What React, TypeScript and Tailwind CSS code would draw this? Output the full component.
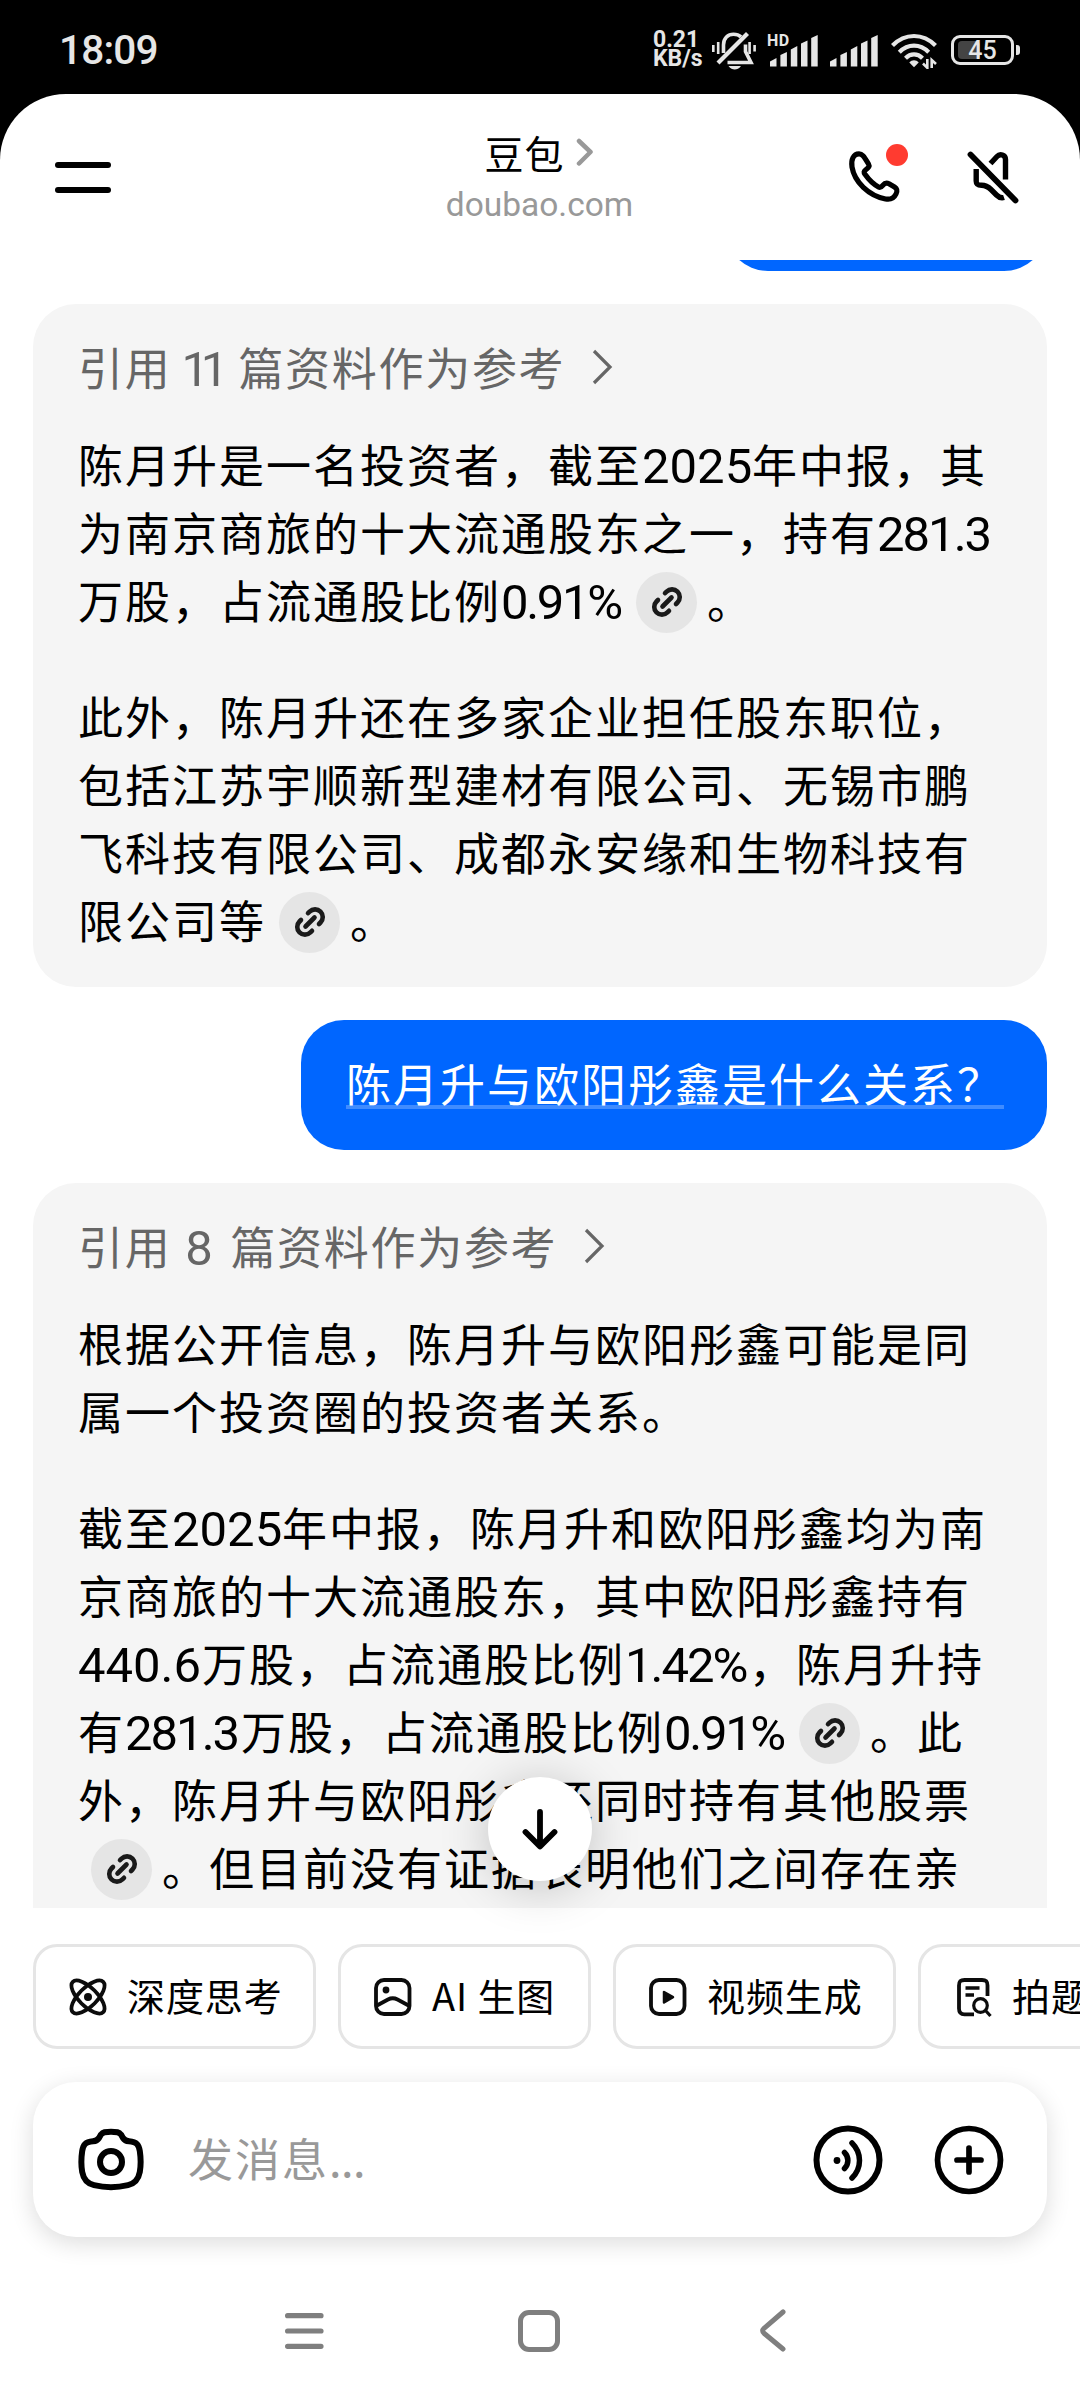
import { ReactNode } from "react";
import clsx from "clsx";

const cjk = "font-['Noto_Sans_CJK_SC',sans-serif]"
const latin = "font-[Roboto,'Noto_Sans_CJK_SC',sans-serif]"

const SignalBars = () => (
    <svg width="48" height="32" viewBox="0 0 48 32" fill="#e6e6e6">
        <path d="M0 31.5V26.5L6.5 23V31.5ZM10.4 31.5V20L16.9 17V31.5ZM20.8 31.5V14.5L27.3 11V31.5ZM31 31.5V8.5L37.5 5.5V31.5ZM41.2 31.5V3L47.7 0V31.5Z" />
    </svg>
)

const StatusBar = () => (
    <div className={clsx("flex h-[94px] shrink-0 items-start justify-between bg-black pr-[60px] pl-[59px] text-[#e6e6e6]", latin)}>
        <div className="mt-[30px] text-[40.5px] leading-[41px] font-medium tracking-[-0.8px]">18:09</div>
        <div className="flex items-start">
            <div className="mt-[30px] w-[51px] text-[23px] leading-[19px] font-bold">
                <div>0.21</div>
                <div>KB/s</div>
            </div>
            <svg className="mt-[30px] ml-[7px]" width="46" height="40" viewBox="0 0 46 40" fill="none" stroke="#e6e6e6" strokeWidth="3.6">
                <path d="M12.5 23V15C12.5 8 17 4.2 22.5 4.2C25.5 4.2 28 5 30 6.8" />
                <path d="M34.5 14.5V21.5L40 32.5H16.5" />
                <path d="M36.5 3.5L7 33" strokeWidth="4.2" />
                <path d="M2.3 15V22M7.2 12V24M38.6 12V24M43.6 15V21.5" strokeWidth="2.6" />
                <path d="M17.5 36H30C28 38.7 26 39.5 23.7 39.5S19.5 38.7 17.5 36Z" fill="#e6e6e6" stroke="none" />
            </svg>
            <div className="relative mt-[35px] ml-[13px]">
                <SignalBars />
                <span className="absolute -top-[2px] -left-[3px] text-[16px] leading-[16px] font-bold tracking-[0.5px]">HD</span>
            </div>
            <div className="mt-[35px] ml-[12px]"><SignalBars /></div>
            <svg className="mt-[33px] ml-[13px]" width="48" height="36" viewBox="0 0 48 36" fill="none" stroke="#e6e6e6" strokeWidth="4.2">
                <path d="M1.5 12.5C14-.2 32-.2 44.5 12.5" />
                <path d="M8.3 19.2C17 10.5 29 10.5 37.7 19.2" />
                <path d="M14.5 25.2C19.5 20.2 26.5 20.2 31.5 25.2" />
                <path d="M18.3 29.5C21 26.5 25 26.5 27.7 29.5L23 34.2Z" fill="#e6e6e6" stroke="none" />
                <path d="M36.3 26V34.8L32 30.5M40.7 35V27L45 31" strokeWidth="2.6" />
            </svg>
            <div className="mt-[35px] ml-[12px] flex items-center">
                <div className="relative flex h-[30px] w-[63px] items-center justify-center rounded-[9px] border-[3px] border-[#e6e6e6]">
                    <div className="absolute top-[3px] left-[4px] h-[18px] w-[22px] rounded-[4px] bg-[#444]" />
                    <span className="relative text-[25px] leading-[25px] font-medium">45</span>
                </div>
                <div className="ml-[2px] h-[10px] w-[4px] rounded-r-[3px] bg-[#e6e6e6]" />
            </div>
        </div>
    </div>
)

const Header = () => (
    <div className="bg-black">
        <header className="grid h-[166px] grid-cols-[1fr_auto_1fr] items-center rounded-t-[66px] bg-white pr-[56px] pl-[55px]">
            <button className="flex w-[56px] flex-col gap-[19px]">
                <span className="h-[6px] rounded-full bg-black" />
                <span className="h-[6px] rounded-full bg-black" />
            </button>
            <div className="flex flex-col items-center">
                <div className="flex items-center">
                    <span className="text-[39px] leading-[50px] tracking-[1px]">豆包</span>
                    <svg className="ml-[11px]" width="19" height="30" viewBox="0 0 19 30" fill="none" stroke="#999" strokeWidth="4.5" strokeLinecap="round" strokeLinejoin="round">
                        <path d="M3 4L14.5 15L3 26.5" />
                    </svg>
                </div>
                <span className={clsx("pt-[5px] text-[33.5px] leading-[46px] text-[#999]", latin)}>doubao.com</span>
            </div>
            <div className="flex items-center justify-end gap-[51px]">
                <button className="relative">
                    <svg width="64" height="60" viewBox="0 0 64 60" fill="none" stroke="#000" strokeWidth="5.2" strokeLinejoin="round">
                        <path d="M14 6.8C17 6.8 18.5 8.5 23.5 17C24.8 19.2 24 20.3 20.5 23C18.8 24.3 18.8 25.5 20 27.3C24 33 28 37 33.5 40C35.2 40.9 36.2 40.3 37.8 38.3C39.8 35.9 41.5 35.5 44 36.8L49.5 40C52.3 41.8 52.6 43.5 51 47C49.2 50.8 46 53 40.5 52C23.5 48.5 9.5 35 7 20C5.8 12.5 8.5 6.8 14 6.8Z" />
                    </svg>
                    <span className="absolute -top-[3px] left-[41px] size-[22px] rounded-full bg-[#ff3b30]" />
                </button>
                <svg width="64" height="64" viewBox="0 0 64 64" fill="none" stroke="#000" strokeWidth="5.4">
                    <path d="M10.5 9.5L55.5 55.5" strokeWidth="5.8" strokeLinecap="round" />
                    <path d="M30.5 18.5L37 11.5C40 8.2 45.5 9.8 45.5 14.5V34.5" />
                    <path d="M16.2 24V36C16.2 39.5 18 40.2 21.5 40.2C25.5 40.2 28 41.5 31 44.5L36.5 50C39 52.5 41 53.5 44 52.5" />
                </svg>
            </div>
        </header>
    </div>
)

const LinkBadge = () => (
    <span className="mr-[10px] ml-[13px] inline-flex size-[61px] items-center justify-center rounded-full bg-[#e5e5e5] align-[1px]">
        <svg width="32" height="32" viewBox="0 0 32 32" fill="none" stroke="#1a1a1a" strokeWidth="4.6" strokeLinecap="round">
            <path d="M14 7.2L15.6 5.6A7.7 7.7 0 0 1 26.5 16.5L25 18" />
            <path d="M18 24.8L16.4 26.4A7.7 7.7 0 0 1 5.5 15.5L7 14" />
            <path d="M11.5 20.5L20.5 11.5" />
        </svg>
    </span>
)

const Num = ({ children, className }: { children: ReactNode, className?: string }) => (
    <span className={clsx("inline-block text-[49px] leading-none", latin, className)}>{children}</span>
)

const Line = ({ children }: { children: ReactNode }) => (
    <div className="h-[68px] leading-[66px] whitespace-nowrap">{children}</div>
)

const Answer = ({ count, countClass, className, children }: { count: number, countClass: string, className: string, children: ReactNode }) => (
    <div className={clsx("flex shrink-0 flex-col rounded-[43px] bg-[#f5f5f5] px-[45px] pt-[29px] text-[45px] tracking-[2px]", className)}>
        <div className="mb-[30px] flex h-[68px] items-center tracking-[1.7px] text-[#666]">
            <div className="leading-[68px] whitespace-nowrap">引用<Num className={countClass}>{count}</Num>篇资料作为参考</div>
            <svg className="ml-[26px]" width="24" height="40" viewBox="0 0 24 40" fill="none" stroke="#666" strokeWidth="3.2">
                <path d="M3 4L19 20L3 36" />
            </svg>
        </div>
        <div className="flex flex-col gap-[48px]">{children}</div>
    </div>
)

const Chip = ({ icon, label, className }: { icon: ReactNode, label: string, className: string }) => (
    <button className={clsx("flex h-[105px] shrink-0 items-center gap-[17px] rounded-[24px] border-[3px] border-[#e5e5e5] pl-[30px] text-[38px] tracking-[0.9px] whitespace-nowrap", className)}>
        <svg width="44" height="44" viewBox="0 0 44 44" fill="none" stroke="#0c0c0c" strokeWidth="3.8">
            {icon}
        </svg>
        <span className="pb-[4px]">{label}</span>
    </button>
)

const chips = [
    {
        label: "深度思考",
        className: "w-[283px]",
        icon: <>
            <ellipse cx="22" cy="22" rx="21.5" ry="9.2" transform="rotate(45 22 22)" />
            <ellipse cx="22" cy="22" rx="21.5" ry="9.2" transform="rotate(-45 22 22)" />
            <circle cx="22" cy="22" r="4" fill="#0c0c0c" stroke="none" />
        </>,
    },
    {
        label: "AI 生图",
        className: "w-[253px]",
        icon: <>
            <rect x="5" y="5" width="33.5" height="34" rx="8" />
            <circle cx="15" cy="15" r="3.4" fill="#0c0c0c" stroke="none" />
            <path d="M5 31L17 24.5C20.5 22.7 23 22.7 26.5 24.5L38.5 31" />
        </>,
    },
    {
        label: "视频生成",
        className: "w-[283px]",
        icon: <>
            <rect x="5" y="5" width="33.5" height="34" rx="8" />
            <path d="M18 17V27.5L27 22.2Z" fill="#0c0c0c" strokeWidth="2.5" strokeLinejoin="round" />
        </>,
    },
    {
        label: "拍题答疑",
        className: "w-[283px]",
        icon: <>
            <path d="M36.5 21V10.5C36.5 6.5 35 5 31 5H13.5C9.5 5 8 6.5 8 10.5V33.5C8 37.5 9.5 39.3 13.5 39.3H23" />
            <path d="M14.5 13H28.5M14.5 20H23" strokeWidth="3.4" />
            <circle cx="29.5" cy="30.5" r="6.8" strokeWidth="3.2" />
            <path d="M34.5 35.5L39.5 41" strokeWidth="3.2" />
        </>,
    },
]

const Composer = () => (
    <div className="mx-[33px] mt-[33px] flex h-[155px] shrink-0 items-center rounded-[43px] bg-white pr-[43px] pl-[42px] shadow-[0_6px_24px_rgba(0,0,0,0.14)]">
        <svg width="72" height="68" viewBox="0 0 72 68" fill="none" stroke="#000" strokeWidth="6">
            <path d="M36 5.8C30 5.8 28 6 26 8.5L24 12C22.5 14.3 21 15 18 15.3C10 16.2 8.2 18.5 7.2 25C6 33 6 39 7.2 46C8.5 53 12 57.5 19 59.2C29 61.5 43 61.5 53 59.2C60 57.5 63.5 53 64.8 46C66 39 66 33 64.8 25C63.8 18.5 62 16.2 54 15.3C51 15 49.5 14.3 48 12L46 8.5C44 6 42 5.8 36 5.8Z" />
            <circle cx="36" cy="36" r="11" />
        </svg>
        <span className="ml-[41px] flex-1 pb-[4px] text-[45px] leading-[68px] tracking-[2px] text-[#999]">发消息<span className="tracking-[-0.5px]">...</span></span>
        <svg width="70" height="70" viewBox="0 0 70 70" fill="none" stroke="#000" strokeWidth="6" strokeLinecap="round">
            <circle cx="35" cy="35" r="31.5" />
            <circle cx="24" cy="35.5" r="3.4" fill="#000" stroke="none" />
            <path d="M31.5 27.5C36 32 36 39 31.5 43.5" strokeWidth="5.5" />
            <path d="M39 18C49 28 49 43 39 53" strokeWidth="5.5" />
        </svg>
        <svg className="ml-[51px]" width="70" height="70" viewBox="0 0 70 70" fill="none" stroke="#000" strokeWidth="5.7" strokeLinecap="round">
            <circle cx="35" cy="35" r="31.5" />
            <path d="M35 23V47M23 35H47" />
        </svg>
    </div>
)

const NavBar = () => (
    <div className="flex h-[163px] items-center pt-[25px] pl-[284px]">
        <svg width="41" height="46" viewBox="0 0 41 46" stroke="#7f7f7f" strokeWidth="5.2" strokeLinecap="round">
            <path d="M3.6 7.7H37M3.6 23H37M3.6 38.3H37" />
        </svg>
        <div className="ml-[193px] size-[42px] rounded-[11px] border-[5px] border-[#7f7f7f]" />
        <svg className="ml-[199px]" width="30" height="46" viewBox="0 0 30 46" fill="none" stroke="#7f7f7f" strokeWidth="5" strokeLinecap="round" strokeLinejoin="round">
            <path d="M24 4L5 20.3C3.2 22 3.2 23.6 5 25.3L24 41" />
        </svg>
    </div>
)

export default function App() {
    return (
        <div className={clsx("flex h-[2400px] w-[1080px] flex-col overflow-hidden bg-white text-black", cjk)}>
            <StatusBar />
            <Header />
            <div className="relative h-[1648px] shrink-0">
                <main className="flex h-full flex-col gap-[33px] overflow-hidden px-[33px]">
                    {/* tail of the previous question */}
                    <div className="-mt-[119px] h-[130px] w-[322px] shrink-0 self-end rounded-[43px] bg-[#0066ff]" />
                    <Answer count={11} countClass="w-[67px] pl-[10px] tracking-[-8.2px]" className="pb-[32px]">
                        <div>
                            <Line>陈月升是一名投资者，截至<Num className="w-[110px] tracking-[0px]">2025</Num>年中报，其</Line>
                            <Line>为南京商旅的十大流通股东之一，持有<Num className="w-[116px] tracking-[-2px]">281.3</Num></Line>
                            <Line>万股，占流通股比例<Num className="w-[122px] tracking-[-2.3px]">0.91%</Num><LinkBadge />。</Line>
                        </div>
                        <div>
                            <Line>此外，陈月升还在多家企业担任股东职位，</Line>
                            <Line>包括江苏宇顺新型建材有限公司、无锡市鹏</Line>
                            <Line>飞科技有限公司、成都永安缘和生物科技有</Line>
                            <Line>限公司等<LinkBadge />。</Line>
                        </div>
                    </Answer>
                    <div className="h-[130px] shrink-0 self-end rounded-[43px] bg-[#0066ff] pt-[29px] pr-[43px] pl-[45px] text-[45px] tracking-[2px] text-white">
                        <span className="block leading-[68px] underline decoration-white/25 decoration-[4px] underline-offset-[3px] [text-decoration-skip-ink:none]">陈月升与欧阳彤鑫是什么关系？</span>
                    </div>
                    {/* still scrolling, its lower edge stays below the fold */}
                    <Answer count={8} countClass="w-[59px] pr-[4px] text-center tracking-[0px]" className="pb-[100px]">
                        <div>
                            <Line>根据公开信息，陈月升与欧阳彤鑫可能是同</Line>
                            <Line>属一个投资圈的投资者关系。</Line>
                        </div>
                        <div>
                            <Line>截至<Num className="w-[110px] tracking-[0px]">2025</Num>年中报，陈月升和欧阳彤鑫均为南</Line>
                            <Line>京商旅的十大流通股东，其中欧阳彤鑫持有</Line>
                            <Line><Num className="w-[124px] tracking-[0px]">440.6</Num>万股，占流通股比例<Num className="w-[124px] tracking-[-2px]">1.42%</Num>，陈月升持</Line>
                            <Line>有<Num className="w-[116px] tracking-[-2px]">281.3</Num>万股，占流通股比例<Num className="w-[122px] tracking-[-2.3px]">0.91%</Num><LinkBadge />。此</Line>
                            <Line>外，陈月升与欧阳彤鑫还同时持有其他股票</Line>
                            <Line><LinkBadge />。但目前没有证据表明他们之间存在亲</Line>
                        </div>
                    </Answer>
                </main>
                <button className="absolute bottom-[27px] left-[488px] flex size-[104px] items-center justify-center rounded-full bg-white shadow-[0_6px_50px_rgba(0,0,0,0.22)]">
                    <svg width="44" height="48" viewBox="0 0 44 48" fill="none" stroke="#000" strokeWidth="5.8" strokeLinecap="round" strokeLinejoin="round">
                        <path d="M22 7V41M7.5 27L22 41.5L36.5 27" />
                    </svg>
                </button>
            </div>
            <div className="mt-[36px] flex shrink-0 gap-[22px] overflow-hidden pl-[33px]">
                {chips.map((chip) => (
                    <Chip key={chip.label} {...chip} />
                ))}
            </div>
            <Composer />
            <NavBar />
        </div>
    )
}
